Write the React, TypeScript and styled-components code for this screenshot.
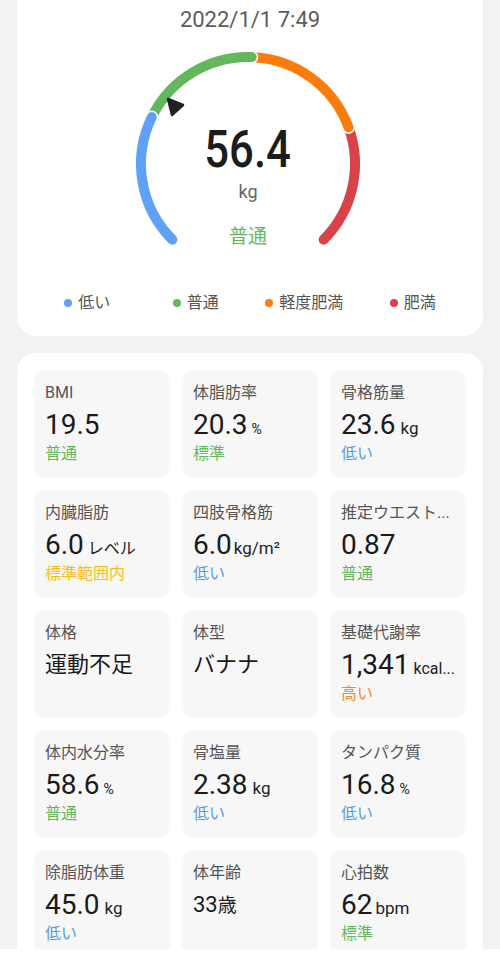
import styled, { createGlobalStyle } from "styled-components";

const GlobalStyle = createGlobalStyle`
  body {
    margin: 0;
    background: #f1f2f4;
    font-family: Roboto, "Noto Sans CJK JP", sans-serif;
    color: #1a1a1a;
  }
`;

const Page = styled.div`
  padding: 0 17px 40px;
  display: flex;
  flex-direction: column;
  gap: 17px;
`;

const Panel = styled.section<{ $top?: boolean }>`
  background: #fff;
  border-radius: ${(p) => (p.$top ? "0 0 20px 20px" : "18px")};
  padding: ${(p) => (p.$top ? "6px 16px 22px" : "17px")};
`;

const DateLine = styled.div`
  text-align: center;
  font-size: 22px;
  line-height: 28px;
  color: #5c5c5c;
`;

const Gauge = styled.div`
  position: relative;
  width: 240px;
  height: 205px;
  margin: 10px auto 0;
  display: flex;
  flex-direction: column;
  align-items: center;
  padding-top: 76px;
  box-sizing: border-box;
`;

const GaugeSvg = styled.svg`
  position: absolute;
  left: 0;
  top: 0;
`;

const BigValue = styled.div`
  position: relative;
  font-size: 52px;
  line-height: 60px;
  font-weight: 500;
  color: #1c1c1c;
  transform: scaleX(0.84);
  margin-left: -4px;
`;

const BigUnit = styled.div`
  position: relative;
  font-size: 18px;
  line-height: 24px;
  color: #666;
  margin-left: -4px;
`;

const BigStatus = styled.div`
  position: relative;
  margin-top: 20px;
  font-size: 19px;
  line-height: 26px;
  color: #63b75d;
  margin-left: -4px;
`;

const Legend = styled.div`
  display: grid;
  grid-template-columns: repeat(4, 1fr);
  margin-top: 43px;
`;

const LegendItem = styled.div`
  display: flex;
  align-items: center;
  justify-content: center;
  gap: 6px;
  font-size: 16px;
  line-height: 22px;
  color: #555;
`;

const Dot = styled.span<{ $c: string }>`
  width: 8px;
  height: 8px;
  border-radius: 50%;
  background: ${(p) => p.$c};
`;

const Grid = styled.div`
  display: grid;
  grid-template-columns: repeat(3, 1fr);
  gap: 12px;
`;

const Tile = styled.div`
  background: #f7f7f8;
  border-radius: 12px;
  height: 108px;
  padding: 12px 11px 0;
  box-sizing: border-box;
  min-width: 0;
`;

const Label = styled.div`
  font-size: 16px;
  line-height: 22px;
  color: #555;
  white-space: nowrap;
`;

const Value = styled.div<{ $small?: boolean }>`
  display: flex;
  align-items: baseline;
  height: 40px;
  padding-top: 6px;
  box-sizing: border-box;
  font-size: ${(p) => (p.$small ? "22px" : "28px")};
  line-height: 30px;
  color: #1a1a1a;
  white-space: nowrap;
`;

const Unit = styled.span<{ $size?: number; $gap?: number }>`
  font-size: ${(p) => p.$size ?? 17}px;
  line-height: 1;
  margin-left: ${(p) => p.$gap ?? 5}px;
  color: #222;
`;

const Status = styled.div<{ $c: string }>`
  font-size: 16px;
  line-height: 20px;
  color: ${(p) => p.$c};
`;

const BottomBar = styled.div`
  position: fixed;
  left: 0;
  right: 0;
  bottom: 0;
  height: 7px;
  background: #fff;
`;

const C = {
  blue: "#5fa1f6",
  green: "#63b75d",
  orange: "#fa7c0b",
  red: "#d8434a",
  sBlue: "#5a9be2",
  sGreen: "#62b85f",
  sYellow: "#f4be22",
  sOrange: "#ef8a2e",
};

const CX = 118;
const CY = 120;
const R = 107;

const pt = (deg: number) => {
  const a = (deg * Math.PI) / 180;
  return `${(CX + R * Math.cos(a)).toFixed(2)} ${(CY - R * Math.sin(a)).toFixed(2)}`;
};

const arc = (from: number, to: number) => `M ${pt(from)} A ${R} ${R} 0 0 1 ${pt(to)}`;

// drawn in this order so each segment's end cap sits on the next one
const segments = [
  { from: 20, to: -45, color: C.red },
  { from: 88, to: 20, color: C.orange },
  { from: 154, to: 88, color: C.green },
  { from: 225, to: 154, color: C.blue },
];

type Metric = {
  label: string;
  value: string;
  unit?: string;
  unitSize?: number;
  unitGap?: number;
  status?: string;
  color?: string;
  small?: boolean;
};

const metrics: Metric[] = [
  { label: "BMI", value: "19.5", status: "普通", color: C.sGreen },
  { label: "体脂肪率", value: "20.3", unit: "%", unitSize: 14, unitGap: 4, status: "標準", color: C.sGreen },
  { label: "骨格筋量", value: "23.6", unit: "kg", status: "低い", color: C.sBlue },
  { label: "内臓脂肪", value: "6.0", unit: "レベル", unitSize: 16, unitGap: 4, status: "標準範囲内", color: C.sYellow },
  { label: "四肢骨格筋", value: "6.0", unit: "kg/m²", unitSize: 17, unitGap: 2, status: "低い", color: C.sBlue },
  { label: "推定ウエスト...", value: "0.87", status: "普通", color: C.sGreen },
  { label: "体格", value: "運動不足", small: true },
  { label: "体型", value: "バナナ", small: true },
  { label: "基礎代謝率", value: "1,341", unit: "kcal...", unitSize: 16, unitGap: 4, status: "高い", color: C.sOrange },
  { label: "体内水分率", value: "58.6", unit: "%", unitSize: 14, unitGap: 4, status: "普通", color: C.sGreen },
  { label: "骨塩量", value: "2.38", unit: "kg", status: "低い", color: C.sBlue },
  { label: "タンパク質", value: "16.8", unit: "%", unitSize: 14, unitGap: 4, status: "低い", color: C.sBlue },
  { label: "除脂肪体重", value: "45.0", unit: "kg", status: "低い", color: C.sBlue },
  { label: "体年齢", value: "33", unit: "歳", unitSize: 19, unitGap: 0, small: true },
  { label: "心拍数", value: "62", unit: "bpm", unitGap: 3, status: "標準", color: C.sGreen },
];

export default function App() {
  return (
    <>
      <GlobalStyle />
      <Page>
        <Panel $top>
          <DateLine>2022/1/1 7:49</DateLine>
          <Gauge>
            <GaugeSvg width="240" height="205" viewBox="0 0 240 205">
              {segments.map((s) => (
                <g key={s.color}>
                  <path d={arc(s.from, s.to)} fill="none" stroke="#fff" strokeWidth={13} strokeLinecap="round" />
                  <path d={arc(s.from, s.to)} fill="none" stroke={s.color} strokeWidth={10} strokeLinecap="round" />
                </g>
              ))}
              <polygon
                points="38,55 53,61 42,71"
                fill="#222"
                stroke="#222"
                strokeWidth={2.5}
                strokeLinejoin="round"
              />
            </GaugeSvg>
            <BigValue>56.4</BigValue>
            <BigUnit>kg</BigUnit>
            <BigStatus>普通</BigStatus>
          </Gauge>
          <Legend>
            <LegendItem>
              <Dot $c={C.blue} />
              低い
            </LegendItem>
            <LegendItem>
              <Dot $c={C.green} />
              普通
            </LegendItem>
            <LegendItem>
              <Dot $c={C.orange} />
              軽度肥満
            </LegendItem>
            <LegendItem>
              <Dot $c={C.red} />
              肥満
            </LegendItem>
          </Legend>
        </Panel>

        <Panel>
          <Grid>
            {metrics.map((m) => (
              <Tile key={m.label}>
                <Label>{m.label}</Label>
                <Value $small={m.small}>
                  {m.value}
                  {m.unit && (
                    <Unit $size={m.unitSize} $gap={m.unitGap}>
                      {m.unit}
                    </Unit>
                  )}
                </Value>
                {m.status && <Status $c={m.color!}>{m.status}</Status>}
              </Tile>
            ))}
          </Grid>
        </Panel>
      </Page>
      <BottomBar />
    </>
  );
}
